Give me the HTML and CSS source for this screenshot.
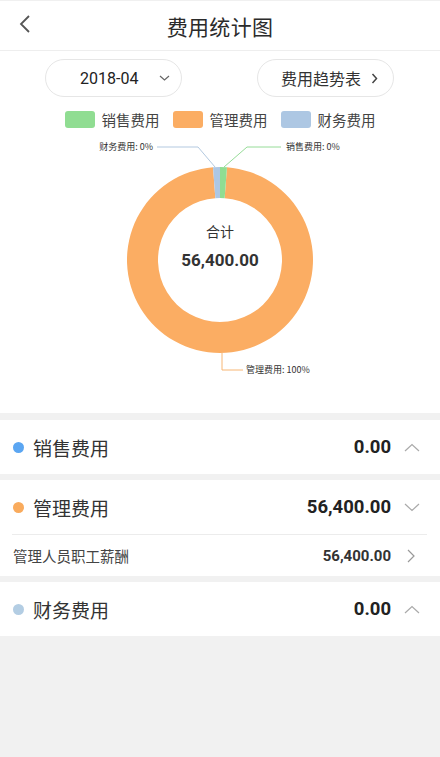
FILE: index.html
```html
<!DOCTYPE html>
<html lang="zh-CN">
<head>
<meta charset="utf-8">
<title>费用统计图</title>
<link rel="stylesheet" href="styles.css">
</head>
<body>
<div class="top">
  <header class="header">
    <svg class="back" width="14" height="20" viewBox="0 0 14 20"><polyline points="11,2 3,10 11,18" fill="none" stroke="#555" stroke-width="1.8"/></svg>
    <h1 class="title">费用统计图</h1>
  </header>
  <div class="toolbar">
    <div class="pill pill-date">
      <span class="pill-text">2018-04</span>
      <svg class="pill-icon-down" width="11" height="6" viewBox="0 0 11 6"><polyline points="1,1 5.5,5 10,1" fill="none" stroke="#666" stroke-width="1.2"/></svg>
    </div>
    <div class="pill pill-trend">
      <span class="pill-text">费用趋势表</span>
      <svg class="pill-icon-right" width="7" height="11" viewBox="0 0 7 11"><polyline points="1.5,1 5.5,5.5 1.5,10" fill="none" stroke="#444" stroke-width="1.5"/></svg>
    </div>
  </div>
  <div class="legend">
    <div class="legend-item"><span class="swatch swatch-green"></span><span class="legend-text">销售费用</span></div>
    <div class="legend-item"><span class="swatch swatch-orange"></span><span class="legend-text">管理费用</span></div>
    <div class="legend-item"><span class="swatch swatch-blue"></span><span class="legend-text">财务费用</span></div>
  </div>
  <svg class="chart" width="440" height="283" viewBox="0 0 440 283">
    <path d="M 226.97 37.26 A 93 93 0 1 1 213.03 37.26 L 215.35 68.17 A 62 62 0 1 0 224.65 68.17 Z" fill="#fbad63"/>
    <path d="M 220 37 A 93 93 0 0 1 226.97 37.26 L 224.65 68.17 A 62 62 0 0 0 220 68 Z" fill="#90dd92"/>
    <path d="M 213.03 37.26 A 93 93 0 0 1 220 37 L 220 68 A 62 62 0 0 0 215.35 68.17 Z" fill="#adc7e3"/>
    <polyline points="157,17 198,17 215,37" fill="none" stroke="#b3c9e0" stroke-width="1"/>
    <polyline points="224,37 247,17 281,17" fill="none" stroke="#96dc98" stroke-width="1"/>
    <polyline points="222,223 222,240 243,240" fill="none" stroke="#f7b675" stroke-width="1"/>
    <text class="lbl" x="153" y="20" text-anchor="end">财务费用: 0%</text>
    <text class="lbl" x="286" y="20">销售费用: 0%</text>
    <text class="lbl" x="246" y="243">管理费用: 100%</text>
    <text class="center-label" x="220" y="107" text-anchor="middle">合计</text>
    <text class="center-value" x="220" y="136" text-anchor="middle">56,400.00</text>
  </svg>
</div>

<section class="card">
  <div class="row">
    <span class="dot dot-blue"></span>
    <span class="row-title">销售费用</span>
    <span class="row-amount">0.00</span>
    <svg class="row-icon" width="16" height="9" viewBox="0 0 16 9"><polyline points="1,8 8,1.5 15,8" fill="none" stroke="#aaa" stroke-width="1.2"/></svg>
  </div>
</section>

<section class="card">
  <div class="row">
    <span class="dot dot-orange"></span>
    <span class="row-title">管理费用</span>
    <span class="row-amount">56,400.00</span>
    <svg class="row-icon" width="16" height="9" viewBox="0 0 16 9"><polyline points="1,1 8,7.5 15,1" fill="none" stroke="#aaa" stroke-width="1.2"/></svg>
  </div>
  <div class="divider"></div>
  <div class="subrow">
    <span class="sub-title">管理人员职工薪酬</span>
    <span class="sub-amount">56,400.00</span>
    <svg class="sub-icon" width="16" height="14" viewBox="0 0 16 14"><polyline points="4,1 10,7 4,13" fill="none" stroke="#999" stroke-width="1.2"/></svg>
  </div>
</section>

<section class="card">
  <div class="row">
    <span class="dot dot-lightblue"></span>
    <span class="row-title">财务费用</span>
    <span class="row-amount">0.00</span>
    <svg class="row-icon" width="16" height="9" viewBox="0 0 16 9"><polyline points="1,8 8,1.5 15,8" fill="none" stroke="#aaa" stroke-width="1.2"/></svg>
  </div>
</section>
</body>
</html>
```
FILE: styles.css
```css
html, body {
  margin: 0;
  padding: 0;
}
body {
  background: #f1f1f1;
  font-family: Roboto, "Noto Sans CJK SC", sans-serif;
  color: #333;
  width: 440px;
  min-height: 757px;
}
.top {
  background: #fff;
}
.header {
  height: 49px;
  border-top: 1px solid #f0f0f0;
  border-bottom: 1px solid #eeeeee;
  display: flex;
  align-items: center;
  justify-content: center;
  position: relative;
}
.back {
  position: absolute;
  left: 18px;
  top: 13px;
}
.title {
  margin: 0;
  font-size: 21px;
  font-weight: 400;
  color: #2b2b2b;
  font-family: "Noto Sans CJK SC", sans-serif;
  letter-spacing: 0.3px;
}
.toolbar {
  display: flex;
  justify-content: space-between;
  padding: 8px 46px 0 45px;
}
.pill {
  height: 36px;
  width: 135px;
  border: 1px solid #e6e6e6;
  border-radius: 19px;
  display: flex;
  align-items: center;
  box-sizing: content-box;
}
.pill-date .pill-text {
  margin-left: 34px;
  font-size: 16px;
  color: #222;
}
.pill-icon-down {
  margin-left: 21px;
}
.pill-trend .pill-text {
  margin-left: 23px;
  font-size: 16px;
  color: #333;
  font-family: "Noto Sans CJK SC", sans-serif;
}
.pill-icon-right {
  margin-left: 10px;
}
.legend {
  display: flex;
  justify-content: center;
  gap: 13px;
  margin-top: 13px;
  height: 18px;
  align-items: center;
}
.legend-item {
  display: flex;
  align-items: center;
}
.swatch {
  width: 30px;
  height: 17px;
  border-radius: 3px;
  margin-right: 7px;
}
.swatch-green { background: #90dd92; }
.swatch-orange { background: #fbad63; }
.swatch-blue { background: #adc7e3; }
.legend-text {
  font-size: 14.5px;
  color: #444;
  font-family: "Noto Sans CJK SC", sans-serif;
}
.chart {
  display: block;
  margin-top: 2px;
}
.lbl {
  font-size: 9px;
  fill: #333;
  font-family: "Noto Sans CJK SC", sans-serif;
}
.center-label {
  font-size: 14px;
  fill: #333;
  font-family: "Noto Sans CJK SC", sans-serif;
}
.center-value {
  font-size: 17px;
  font-weight: 700;
  fill: #333;
  font-family: Roboto, sans-serif;
}
.card {
  background: #fff;
  margin-top: 6px;
  padding: 0 12px 0 12px;
}
.card:first-of-type {
  margin-top: 7px;
}
.row {
  height: 54px;
  display: flex;
  align-items: center;
  padding: 0 8px 0 1px;
}
.dot {
  width: 11px;
  height: 11px;
  border-radius: 50%;
  margin-right: 9px;
}
.dot-blue { background: #5ba6f2; }
.dot-orange { background: #f9ab5d; }
.dot-lightblue { background: #b3cde3; }
.row-title {
  font-size: 19px;
  color: #333;
  font-family: "Noto Sans CJK SC", sans-serif;
  flex: 1;
}
.row-amount {
  font-size: 18.5px;
  font-weight: 700;
  color: #222;
}
.row-icon {
  margin-left: 13px;
}
.divider {
  height: 1px;
  background: #ececec;
  margin: 0 1px 0 0;
}
.subrow {
  height: 41px;
  display: flex;
  align-items: center;
  padding: 0 8px 0 1px;
}
.sub-title {
  flex: 1;
  font-size: 14.5px;
  color: #444;
  font-family: "Noto Sans CJK SC", sans-serif;
}
.sub-amount {
  font-size: 15px;
  font-weight: 700;
  color: #333;
}
.sub-icon {
  margin-left: 13px;
}
```
